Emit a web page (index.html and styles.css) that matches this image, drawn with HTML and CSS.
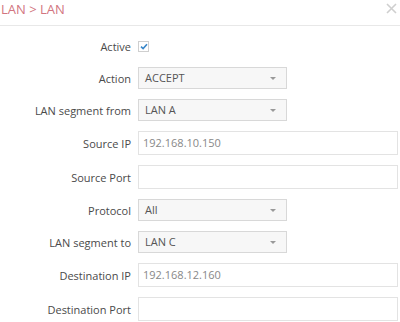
FILE: index.html
```html
<!DOCTYPE html>
<html>
<head>
<meta charset="utf-8">
<link rel="stylesheet" href="styles.css">
</head>
<body>
<div class="modal">
  <div class="header">
    <span class="title">LAN &gt; LAN</span>
    <svg class="close" width="11" height="11" viewBox="0 0 11 11"><path d="M1 1 L10 10 M10 1 L1 10" stroke="#cfcfcf" stroke-width="1.6" fill="none"/></svg>
  </div>
  <form class="form">
    <div class="row row-check">
      <label class="lbl">Active</label>
      <span class="check">
        <svg width="8" height="7" viewBox="0 0 8 7"><path d="M1 3.6 L3.1 5.6 L7 1.2" fill="none" stroke="#3a87c9" stroke-width="1.6"/></svg>
      </span>
    </div>
    <div class="row">
      <label class="lbl">Action</label>
      <div class="select">ACCEPT<span class="caret"></span></div>
    </div>
    <div class="row">
      <label class="lbl">LAN segment from</label>
      <div class="select">LAN A<span class="caret"></span></div>
    </div>
    <div class="row">
      <label class="lbl">Source IP</label>
      <div class="input">192.168.10.150</div>
    </div>
    <div class="row">
      <label class="lbl">Source Port</label>
      <div class="input"></div>
    </div>
    <div class="row">
      <label class="lbl">Protocol</label>
      <div class="select">All<span class="caret"></span></div>
    </div>
    <div class="row">
      <label class="lbl">LAN segment to</label>
      <div class="select">LAN C<span class="caret"></span></div>
    </div>
    <div class="row">
      <label class="lbl">Destination IP</label>
      <div class="input">192.168.12.160</div>
    </div>
    <div class="row">
      <label class="lbl">Destination Port</label>
      <div class="input"></div>
    </div>
  </form>
</div>
</body>
</html>
```
FILE: styles.css
```css
html, body {
  margin: 0;
  padding: 0;
  background: #fff;
}
body {
  font-family: "Open Sans", "Liberation Sans", sans-serif;
  font-size: 11px;
  color: #4a4a4a;
}
.modal {
  width: 400px;
}
.header {
  height: 25px;
  border-bottom: 1px solid #e8e8e8;
  display: flex;
  justify-content: space-between;
  align-items: flex-start;
}
.title {
  font-size: 13px;
  color: #d27580;
  line-height: 16px;
  padding-left: 1px;
  margin-top: 1px;
}
.close {
  margin-top: 3px;
  margin-right: 3px;
}
.form {
  padding-top: 9px;
  display: flex;
  flex-direction: column;
  gap: 10px;
}
.row {
  display: grid;
  grid-template-columns: 131px 1fr;
  column-gap: 7px;
  align-items: center;
}
.row-check {
  height: 22px;
}
.lbl {
  text-align: right;
  color: #4a4a4a;
}
.check {
  width: 9px;
  height: 9px;
  border: 1px solid #cfcfcf;
  background: #fff;
  display: flex;
  align-items: center;
  justify-content: center;
  margin-top: 1px;
}
.select {
  height: 20px;
  border: 1px solid #d8d8d8;
  background: #f7f7f7;
  color: #555;
  line-height: 20px;
  padding-left: 6px;
  box-sizing: content-box;
  width: 141px;
  position: relative;
}
.caret {
  position: absolute;
  right: 10px;
  top: 9px;
  width: 0;
  height: 0;
  border-left: 3px solid transparent;
  border-right: 3px solid transparent;
  border-top: 3px solid #999;
}
.input {
  height: 22px;
  line-height: 22px;
  border: 1px solid #e3e3e3;
  background: #fff;
  color: #888;
  padding-left: 4px;
  margin-right: 2px;
}
```
